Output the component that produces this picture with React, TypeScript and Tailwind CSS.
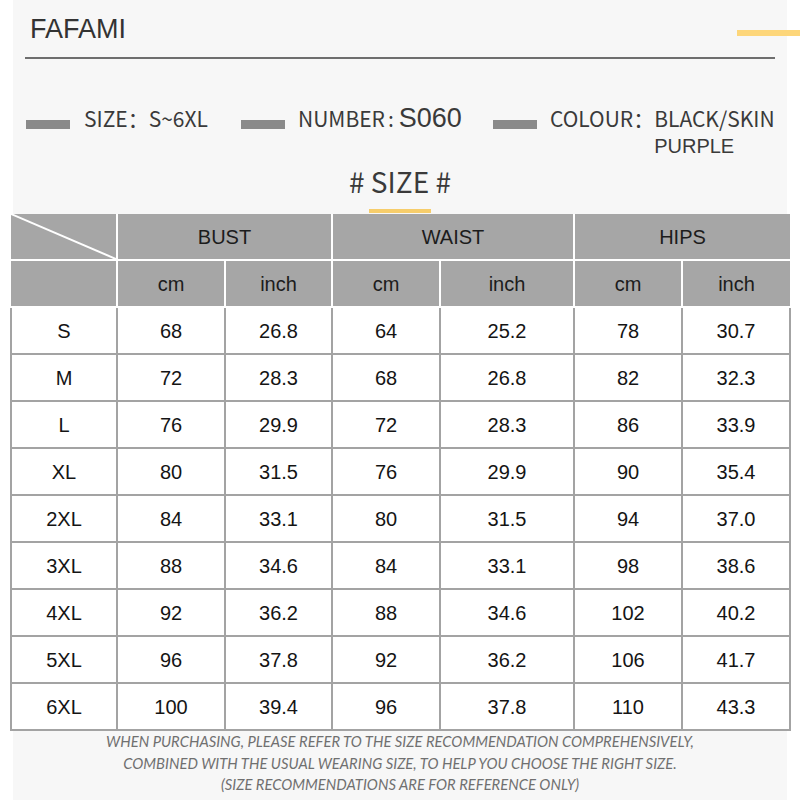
import React from "react";

const rows: string[][] = [
  ["S", "68", "26.8", "64", "25.2", "78", "30.7"],
  ["M", "72", "28.3", "68", "26.8", "82", "32.3"],
  ["L", "76", "29.9", "72", "28.3", "86", "33.9"],
  ["XL", "80", "31.5", "76", "29.9", "90", "35.4"],
  ["2XL", "84", "33.1", "80", "31.5", "94", "37.0"],
  ["3XL", "88", "34.6", "84", "33.1", "98", "38.6"],
  ["4XL", "92", "36.2", "88", "34.6", "102", "40.2"],
  ["5XL", "96", "37.8", "92", "36.2", "106", "41.7"],
  ["6XL", "100", "39.4", "96", "37.8", "110", "43.3"],
];

const cjk = "font-['Noto_Sans_CJK_SC','Noto_Sans',sans-serif]";
const arial = "font-['Liberation_Sans',Arial,sans-serif]";

export default function App() {
  return (
    <div className="w-[800px] h-[800px] bg-white flex overflow-hidden">
      <div className="relative ml-[13px] w-[774px] h-full bg-[#f7f7f7] flex flex-col">
        <div className="absolute top-[30px] right-[-13px] w-[63px] h-[6px] bg-[#fdd67a]" />

        <div className={`${arial} pl-[17px] pt-[16px] text-[27px] leading-[27px] text-[#333]`}>FAFAMI</div>
        <div className="mt-[14px] ml-[12px] w-[750px] h-[2px] bg-[#6e6e6e]" />

        <div className={`${cjk} mt-[47px] flex items-start text-[21px] leading-[24px] text-[#3a3a3a]`}>
          <div className="ml-[13px] w-[215px] flex items-start">
            <div className="mt-[14px] w-[44px] h-[9px] bg-[#8a8a8a]" />
            <span className="ml-[14px]">SIZE：S~6XL</span>
          </div>
          <div className="w-[252px] flex items-start">
            <div className="mt-[14px] w-[44px] h-[9px] bg-[#8a8a8a]" />
            <span className="ml-[13px]">NUMBER</span>
            <span className="ml-[3px]">:</span>
            <span className={`${arial} ml-[5px] text-[27px] leading-[24px]`}>S060</span>
          </div>
          <div className="flex items-start">
            <div className="mt-[14px] w-[44px] h-[9px] bg-[#8a8a8a]" />
            <span className="ml-[13px]">COLOUR：</span>
            <div className="flex flex-col">
              <span>BLACK/SKIN</span>
              <span className={`${arial} mt-[4px] text-[20px]`}>PURPLE</span>
            </div>
          </div>
        </div>

        <div className={`${cjk} mt-[8px] text-center text-[28px] leading-[30px] text-[#3a3a3a]`}># SIZE #</div>
        <div className="mt-[13px] mx-auto w-[62px] h-[4px] bg-[#f6cd6b]" />

        <table
          className={`${arial} mt-[1px] -ml-[3px] w-[779px] table-fixed border-collapse text-center text-[20px] text-[#141414]`}
        >
          <colgroup>
            <col className="w-[106px]" />
            <col className="w-[108px]" />
            <col className="w-[107px]" />
            <col className="w-[108px]" />
            <col className="w-[134px]" />
            <col className="w-[108px]" />
            <col className="w-[108px]" />
          </colgroup>
          <thead className="bg-[#a6a6a6] text-[#1c1c1c]">
            <tr className="h-[46px]">
              <th className="relative p-0 border-2 border-white border-t-0 border-l-0 font-normal">
                <svg className="absolute inset-0 w-full h-full" viewBox="0 0 100 100" preserveAspectRatio="none">
                  <line x1="0" y1="0" x2="100" y2="100" stroke="#ffffff" strokeWidth="2" vectorEffect="non-scaling-stroke" />
                </svg>
              </th>
              <th colSpan={2} className="p-0 border-2 border-white border-t-0 font-normal">BUST</th>
              <th colSpan={2} className="p-0 border-2 border-white border-t-0 font-normal">WAIST</th>
              <th colSpan={2} className="p-0 border-2 border-white border-t-0 border-r-0 font-normal">HIPS</th>
            </tr>
            <tr className="h-[47px]">
              <th className="p-0 border-2 border-white border-l-0 font-normal" />
              <th className="p-0 border-2 border-white font-normal">cm</th>
              <th className="p-0 border-2 border-white font-normal">inch</th>
              <th className="p-0 border-2 border-white font-normal">cm</th>
              <th className="p-0 border-2 border-white font-normal">inch</th>
              <th className="p-0 border-2 border-white font-normal">cm</th>
              <th className="p-0 border-2 border-white border-r-0 font-normal">inch</th>
            </tr>
          </thead>
          <tbody className="bg-white">
            {rows.map((r) => (
              <tr key={r[0]} className="h-[47px]">
                {r.map((c, i) => (
                  <td key={i} className="p-0 border-2 border-[#a3a3a3]">
                    {c}
                  </td>
                ))}
              </tr>
            ))}
          </tbody>
        </table>

        <div className="mt-[0px] text-center italic font-['Lato',sans-serif] text-[14.8px] leading-[21.5px] text-[#707070]">
          <div>WHEN PURCHASING, PLEASE REFER TO THE SIZE RECOMMENDATION COMPREHENSIVELY,</div>
          <div>COMBINED WITH THE USUAL WEARING SIZE, TO HELP YOU CHOOSE THE RIGHT SIZE.</div>
          <div>(SIZE RECOMMENDATIONS ARE FOR REFERENCE ONLY)</div>
        </div>
      </div>
    </div>
  );
}
